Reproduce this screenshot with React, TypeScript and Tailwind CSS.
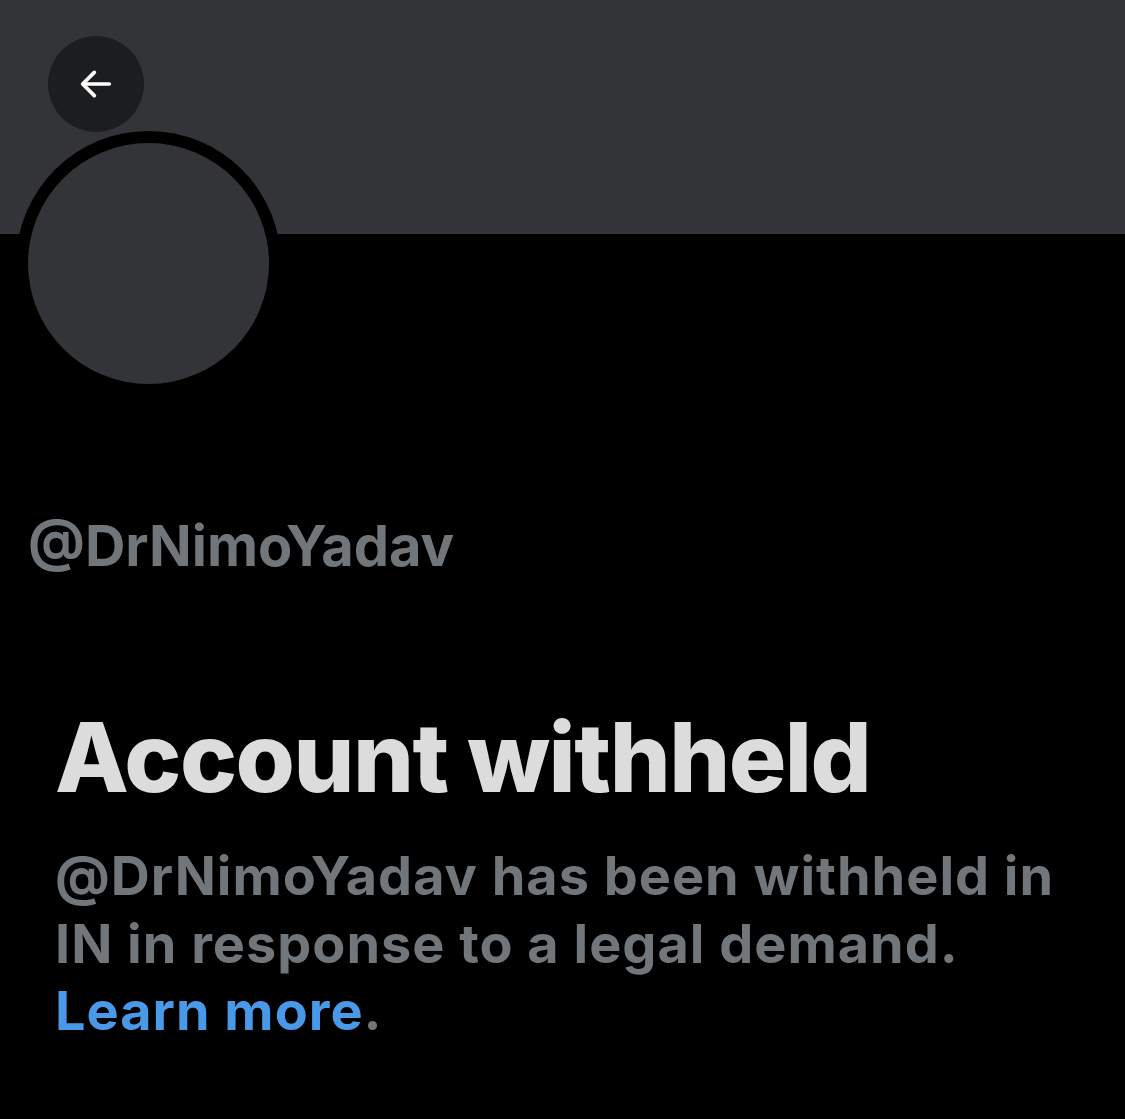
import React from "react";

export default function App() {
  return (
    <div className="w-[1125px] h-[1119px] bg-black overflow-hidden" style={{ fontFamily: "Inter, 'Noto Sans', sans-serif" }}>
      <div className="relative h-[234px] bg-[#333438]">
        <div className="absolute left-[48px] top-[36px] w-[96px] h-[96px] rounded-full bg-[#1c1d1f] flex items-center justify-center">
          <svg width="40" height="40" viewBox="0 0 24 24" fill="none" stroke="white" strokeWidth="2.2" strokeLinecap="round" strokeLinejoin="round">
            <path d="M20 12H5" />
            <path d="M11 5l-7 7 7 7" />
          </svg>
        </div>
        <div className="absolute left-[16px] top-[131px] w-[265px] h-[265px] rounded-full bg-black flex items-center justify-center">
          <div className="w-[241px] h-[241px] rounded-full bg-[#333438]" />
        </div>
      </div>
      <div className="pl-[28px] pt-[282px]">
        <div className="text-[56px] font-bold text-[#71767b] leading-[60px]">@DrNimoYadav</div>
      </div>
      <div className="pl-[55px] pr-[20px] pt-[131px]">
        <div className="text-[96px] font-extrabold text-[#dcdcdc] leading-[100px] tracking-[-1.5px]">Account withheld</div>
        <div className="mt-[35px] text-[54px] font-bold text-[#71767b] leading-[67.5px] tracking-[1px]">
          @DrNimoYadav has been withheld in
          <br />
          IN in response to a legal demand.
          <br />
          <span className="text-[#4a99e9]">Learn more</span>.
        </div>
      </div>
    </div>
  );
}
